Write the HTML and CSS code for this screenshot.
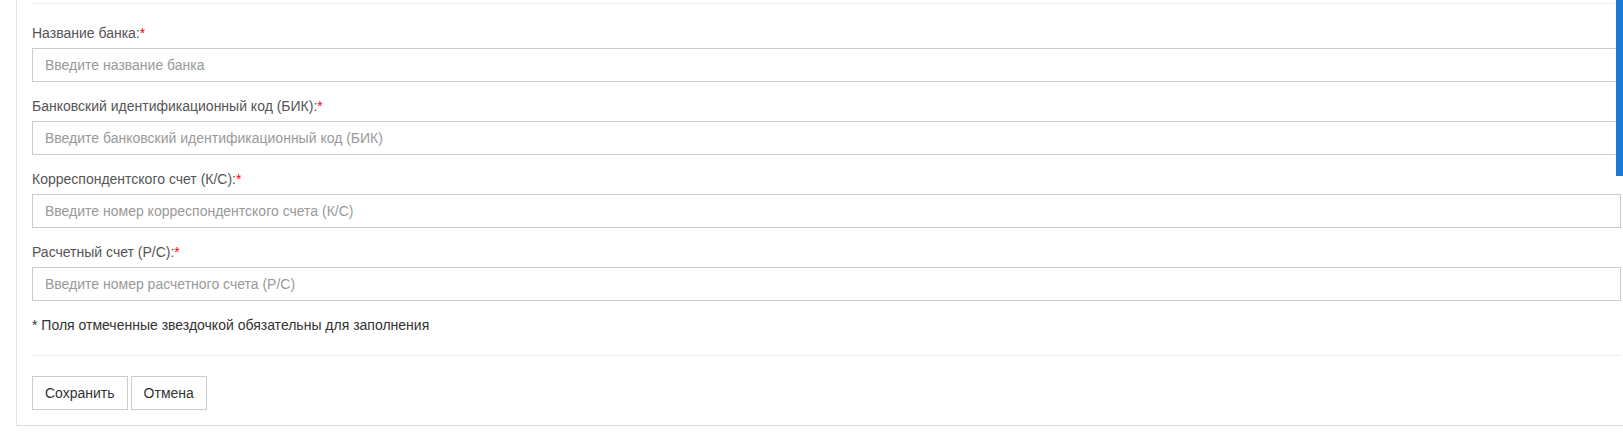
FILE: index.html
```html
<!DOCTYPE html>
<html lang="ru">
<head>
    <meta charset="UTF-8">
    <meta name="viewport" content="width=device-width, initial-scale=1.0">
    <title>Банковские реквизиты</title>
    <link rel="stylesheet" href="styles.css">
</head>
<body>
    <div class="box">
        <hr class="divider top">

        <!-- Bank form -->
        <form class="bank-form" onsubmit="return false;">
            <div class="form-group">
                <label for="bankName">Название банка:<span class="required">*</span></label>
                <input type="text" id="bankName" class="form-control" placeholder="Введите название банка">
            </div>
            <div class="form-group">
                <label for="bankBik">Банковский идентификационный код (БИК):<span class="required">*</span></label>
                <input type="text" id="bankBik" class="form-control" placeholder="Введите банковский идентификационный код (БИК)">
            </div>
            <div class="form-group">
                <label for="bankKs">Корреспондентского счет (К/С):<span class="required">*</span></label>
                <input type="text" id="bankKs" class="form-control" placeholder="Введите номер корреспондентского счета (К/С)">
            </div>
            <div class="form-group">
                <label for="bankRs">Расчетный счет (Р/С):<span class="required">*</span></label>
                <input type="text" id="bankRs" class="form-control" placeholder="Введите номер расчетного счета (Р/С)">
            </div>

            <p class="note">* Поля отмеченные звездочкой обязательны для заполнения</p>

            <hr class="divider">

            <div class="actions">
                <button type="submit" class="btn">Сохранить</button>
                <button type="button" class="btn">Отмена</button>
            </div>
        </form>
    </div>

    <div class="scroll-thumb"></div>
</body>
</html>
```

FILE: styles.css
```css
/* General Styling */
html, body {
    overflow: hidden;
}
body {
    font-family: "Liberation Sans", Arial, sans-serif;
    font-size: 14px;
    color: #333;
    margin: 0;
    padding: 0;
    background-color: #fff;
}
.box {
    margin-left: 16px;
    padding: 3px 2px 15px 15px;
    background: #fff;
    border-left: 1px solid #e3e3e3;
    border-bottom: 1px solid #dcdcdc;
    box-shadow: 0 1px 1px rgba(0, 0, 0, 0.06);
}
.divider {
    border: 0;
    border-top: 1px solid #eee;
    margin: 20px 0;
}
.divider.top {
    margin-top: 0;
}
.form-group {
    margin-bottom: 15px;
}
.form-group label {
    display: block;
    line-height: 19px;
    margin-bottom: 5px;
    color: #555;
}
.required {
    color: #f00;
}
.form-control {
    display: block;
    box-sizing: border-box;
    width: 100%;
    height: 34px;
    padding: 6px 12px;
    font-family: inherit;
    font-size: 14px;
    color: #555;
    background: #fff;
    border: 1px solid #ccc;
    border-radius: 0;
    outline: none;
}
.form-control::placeholder {
    color: #999;
}
.note {
    margin: 0;
    line-height: 19px;
}
.actions {
    display: flex;
    gap: 3px;
}
.btn {
    height: 34px;
    padding: 6px 12px;
    font-family: inherit;
    font-size: 14px;
    color: #333;
    background: #fff;
    border: 1px solid #ccc;
    border-radius: 0;
    cursor: pointer;
}
.btn:hover {
    background-color: #f4f4f4;
}
.scroll-thumb {
    position: fixed;
    top: 0;
    right: 0;
    width: 7px;
    height: 176px;
    background: #1c7ad6;
}
```
